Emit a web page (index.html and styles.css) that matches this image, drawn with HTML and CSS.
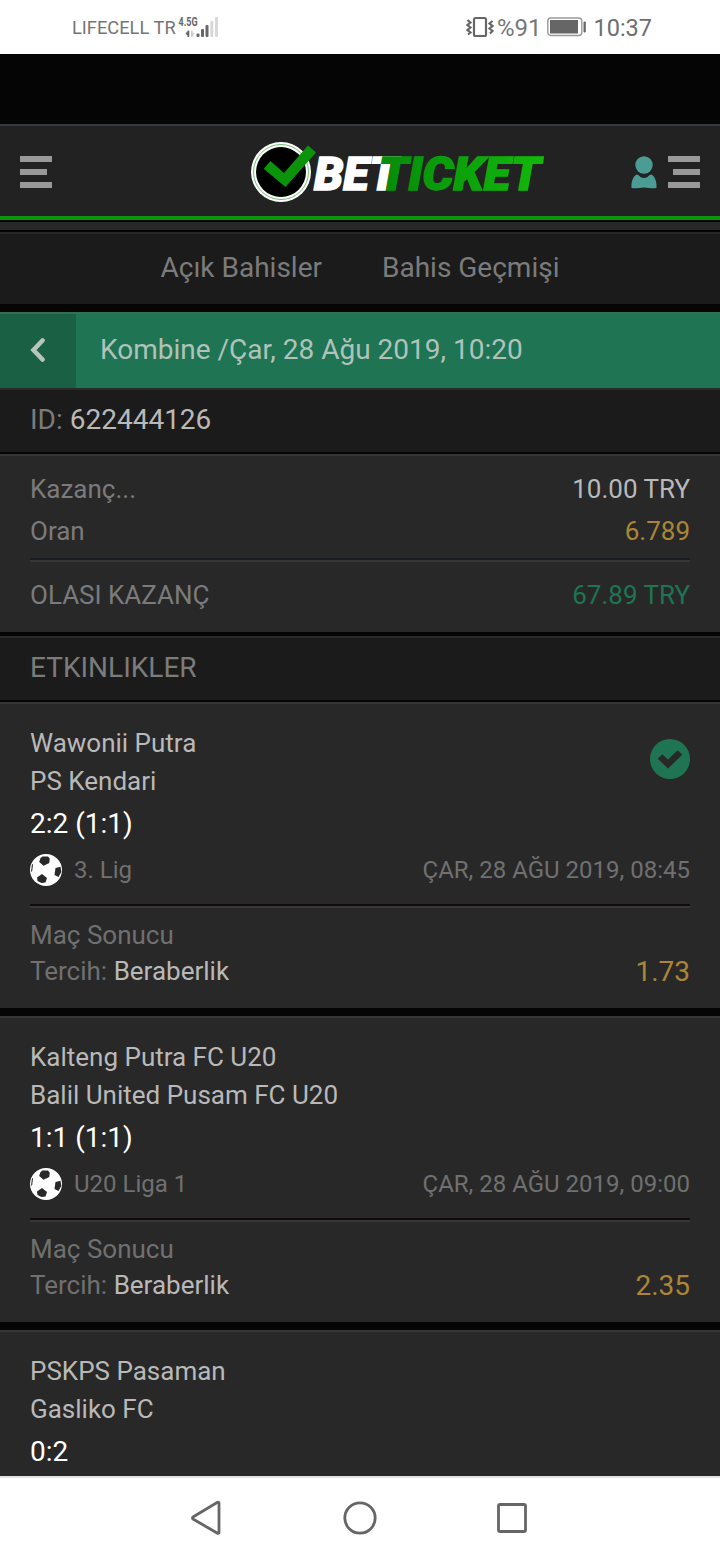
FILE: index.html
```
<!DOCTYPE html>
<html lang="tr">
<head>
    <meta charset="UTF-8">
    <meta name="viewport" content="width=device-width, initial-scale=1.0">
    <title>Betticket</title>
    <link rel="stylesheet" href="styles.css">
</head>
<body>
    <!-- reusable icons -->
    <svg class="defs" width="0" height="0">
        <symbol id="ball" viewBox="0 0 32 32">
            <circle cx="16" cy="16" r="16" fill="#fff"/>
            <path d="M10.500 4 12.500 2.500 18 2.500 19.700 4.500 19.300 9 13.500 11.700 9.200 8zM7 23.500 12 20 17 24 15.500 28.500 11.500 29 7.500 27zM25.500 14 30.500 12.800 31.300 18 28.500 23 24.500 21zM2 10 3 10.500 2.200 17 1 18z" fill="#282828"/>
        </symbol>
    </svg>

    <div class="status">
        <span class="carrier">LIFECELL TR</span>
        <svg class="signal" width="42" height="24" viewBox="0 0 42 24">
            <text x="0.5" y="11" font-family="Roboto" font-size="12" font-weight="700" fill="#666" textLength="19" lengthAdjust="spacingAndGlyphs">4.5G</text>
            <path d="M7.500 18.500L10 16v5zM9.500 15.500h1.800v6.500h-1.800z" fill="#666"/>
            <path d="M13 15.500h1.500v6.500h-1.500zM14.500 17.500l2 1-2 3z" fill="#ccc"/>
            <g fill="#666">
                <rect x="18.500" y="18.500" width="3" height="3.500" rx="1"/>
                <rect x="23" y="14" width="3" height="8" rx="1"/>
                <rect x="27.500" y="10" width="3" height="12" rx="1"/>
            </g>
            <g fill="#d8d8d8">
                <rect x="32.300" y="6" width="3" height="16" rx="1"/>
                <rect x="37" y="2" width="3" height="20" rx="1"/>
            </g>
        </svg>
        <svg class="vibrate" width="28" height="22" viewBox="0 0 28 22">
            <rect x="8" y="2" width="12" height="18" rx="1.500" fill="none" stroke="#666" stroke-width="2.200"/>
            <path d="M1.500 4 4.500 6.500 1.500 9 4.500 11.500 1.500 14 4.500 16.500 2 18.500M26.500 5 23.500 7.500 26.500 10 23.500 12.500 26.500 15 24 17.500" fill="none" stroke="#666" stroke-width="2.200"/>
        </svg>
        <span class="percent">%91</span>
        <svg class="battery" width="40" height="20" viewBox="0 0 40 20">
            <rect x="0.800" y="1" width="34" height="17.500" rx="3" fill="#fff" stroke="#999" stroke-width="1.400"/>
            <rect x="3" y="3" width="28" height="13.500" fill="#666"/>
            <rect x="36.500" y="4.500" width="2.300" height="11" rx="1" fill="#666"/>
        </svg>
        <span class="clock">10:37</span>
    </div>

    <div class="page">
        <div class="header">
            <div class="menu">
                <span></span><span></span><span></span>
            </div>
            <svg class="logo" width="294" height="64" viewBox="0 0 294 64">
                <defs>
                    <linearGradient id="green" x1="0" x2="1">
                        <stop offset="0" stop-color="#058b0a"/>
                        <stop offset="1" stop-color="#13b80b"/>
                    </linearGradient>
                </defs>
                <circle cx="31" cy="32" r="30" fill="#fff"/>
                <circle cx="31" cy="32" r="27.500" fill="none" stroke="#4db04d" stroke-width="0.800"/>
                <circle cx="31" cy="32" r="25" fill="#000"/>
                <path d="M13.700 28.700 20.500 21 34 33 58 5.500 66 12.500 35.500 47z" fill="#0b930b"/>
                <text class="logo-text" x="64" y="50.300" textLength="84" lengthAdjust="spacingAndGlyphs" fill="#fff" stroke="#fff">BET</text>
                <text class="logo-text" x="128.500" y="50.300" textLength="162" lengthAdjust="spacingAndGlyphs" fill="url(#green)" stroke="url(#green)">TICKET</text>
            </svg>
            <div class="header-right">
                <svg width="26" height="33" viewBox="0 0 26 33">
                    <circle cx="13" cy="9" r="8.700" fill="#4a9c94"/>
                    <path d="M5.500 18.500C8 18.500 9 22 13 22s5-3.500 7.500-3.500C24 20.500 26 26 25.500 32 21 33 17 31.500 13 31.500S5 33 .5 32C0 26 2 20.500 5.500 18.500z" fill="#4a9c94"/>
                </svg>
                <div class="menu menu-right">
                    <span></span><span></span><span></span>
                </div>
            </div>
        </div>
        <div class="strip"></div>
        <div class="tabs">
            <a>Açık Bahisler</a>
            <a>Bahis Geçmişi</a>
        </div>

        <div class="title">
            <div class="back">
                <svg width="16" height="24" viewBox="0 0 16 24">
                    <path d="M12.500 2.500 3.500 12 12.500 21.500" fill="none" stroke="#b9c4bf" stroke-width="4.600" stroke-linecap="round"/>
                </svg>
            </div>
            <div class="title-text">Kombine /Çar, 28 Ağu 2019, 10:20</div>
        </div>

        <div class="bar id-bar">ID:&nbsp;<b>622444126</b></div>

        <div class="summary">
            <div class="row"><span>Kazanç...</span><span class="light">10.00 TRY</span></div>
            <div class="row"><span>Oran</span><span class="gold">6.789</span></div>
            <div class="line blue"></div>
            <div class="row total"><span>OLASI KAZANÇ</span><span class="green">67.89 TRY</span></div>
        </div>

        <div class="bar events-bar">ETKINLIKLER</div>

        <div class="card">
            <svg class="won" width="40" height="40" viewBox="0 0 40 40">
                <circle cx="20" cy="20" r="20" fill="#1e7453"/>
                <path d="M10 17.500 18 25 30 13.500" fill="none" stroke="#282828" stroke-width="6.500" stroke-linejoin="miter"/>
            </svg>
            <div class="team">Wawonii Putra</div>
            <div class="team">PS Kendari</div>
            <div class="score">2:2 (1:1)</div>
            <div class="league">
                <svg width="32" height="32"><use href="#ball"/></svg>
                <span>3. Lig</span>
                <span class="date">ÇAR, 28 AĞU 2019, 08:45</span>
            </div>
            <div class="line"></div>
            <div class="market">Maç Sonucu</div>
            <div class="pick"><span>Tercih: <b>Beraberlik</b></span><span class="odds">1.73</span></div>
        </div>

        <div class="card">
            <div class="team">Kalteng Putra FC U20</div>
            <div class="team">Balil United Pusam FC U20</div>
            <div class="score">1:1 (1:1)</div>
            <div class="league">
                <svg width="32" height="32"><use href="#ball"/></svg>
                <span>U20 Liga 1</span>
                <span class="date">ÇAR, 28 AĞU 2019, 09:00</span>
            </div>
            <div class="line"></div>
            <div class="market">Maç Sonucu</div>
            <div class="pick"><span>Tercih: <b>Beraberlik</b></span><span class="odds">2.35</span></div>
        </div>

        <div class="card last">
            <div class="team">PSKPS Pasaman</div>
            <div class="team">Gasliko FC</div>
            <div class="score">0:2</div>
        </div>
    </div>

    <div class="nav">
        <svg width="36" height="36" viewBox="0 0 36 36">
            <path d="M29 3v29.500a1 1 0 0 1-1.500.8L3 19a1.200 1.200 0 0 1 0-2L27.500 2.200a1 1 0 0 1 1.500.8z"/>
        </svg>
        <svg width="36" height="36" viewBox="0 0 36 36">
            <circle cx="18" cy="18" r="15.200"/>
        </svg>
        <svg width="36" height="36" viewBox="0 0 36 36">
            <rect x="4.500" y="4.500" width="27" height="27" rx="1.500"/>
        </svg>
    </div>
</body>
</html>
```
FILE: styles.css
```
* {
    box-sizing: border-box;
}

body {
    display: flex;
    flex-direction: column;
    height: 1560px;
    margin: 0;
    background: #050505;
    color: #7b7b7b;
    font-family: Roboto, sans-serif;
    font-size: 26px;
    overflow: hidden;
}

svg {
    display: block;
    flex: none;
}

b {
    font-weight: 400;
    color: #b9b9b9;
}

.defs {
    position: absolute;
}

/* Phone status bar */
.status {
    display: flex;
    align-items: center;
    height: 54px;
    padding: 0 68px 0 72px;
    background: #fff;
    color: #666;
    white-space: nowrap;
}

.carrier {
    font-size: 18.3px;
    width: 106px;
    padding-top: 1px;
    color: #757575;
}

.vibrate {
    margin-left: auto;
}

.percent {
    margin: 2px 6px 0 3px;
    font-size: 24px;
    color: #777;
}

.clock {
    margin: 2px 0 0 6px;
    font-size: 23.5px;
    color: #6e6e6e;
}

/* Site header */
.page {
    flex: 1;
    padding-top: 70px;
    overflow: hidden;
}

.header {
    display: flex;
    justify-content: space-between;
    align-items: center;
    height: 96px;
    padding: 2px 20px 0;
    background: #222;
    border-top: 2px solid #343a45;
    border-bottom: 4px solid #0b930b;
}

.menu {
    display: flex;
    flex-direction: column;
    gap: 7px;
    width: 32px;
}

.menu span {
    height: 6px;
    background: #999;
}

.menu span:nth-child(2) {
    width: 27px;
}

.menu-right {
    align-items: flex-end;
}

.menu-right span {
    width: 32px;
}

.logo {
    margin-left: 110px;
}

.logo-text {
    font-family: Roboto, sans-serif;
    font-size: 47px;
    font-weight: 900;
    font-style: italic;
    stroke-width: 1.5px;
}

.header-right {
    display: flex;
    align-items: center;
    gap: 11px;
}

.strip {
    height: 8px;
    margin: 2px 0;
    background: #282828;
}

.tabs {
    display: flex;
    justify-content: center;
    gap: 60px;
    height: 72px;
    background: #1b1b1b;
    border-top: 2px solid #282828;
    font-size: 28px;
    line-height: 68px;
}

.title {
    display: flex;
    height: 76px;
    margin-top: 8px;
    background: #1e7453;
    border-top: 2px solid #356f58;
    color: #b0c2ba;
    font-size: 28px;
    line-height: 72px;
}

.back {
    display: flex;
    justify-content: center;
    align-items: center;
    width: 76px;
    padding-bottom: 3px;
    background: #196045;
}

.title-text {
    padding-left: 24px;
}

/* Bars and summary */
.bar {
    height: 64px;
    padding-left: 30px;
    background: #1b1b1b;
    border-top: 2px solid #2a2a2a;
    font-size: 28px;
    line-height: 60px;
}

.summary {
    height: 178px;
    margin: 2px 0 4px;
    padding: 12px 30px 0;
    background: #282828;
    border-top: 2px solid #363636;
}

.row {
    display: flex;
    justify-content: space-between;
    line-height: 42px;
}

.total {
    line-height: 66px;
}

.line {
    height: 4px;
    background: #383636;
    border-top: 2px solid #100c0e;
}

.blue {
    margin-top: 6px;
    background: #35363a;
    border-top-color: #171b24;
}

.light {
    color: #b9b9b9;
}

.gold {
    color: #ad8537;
}

.green {
    color: #1e7453;
}

/* Events */
.card {
    position: relative;
    height: 306px;
    margin-bottom: 8px;
    padding: 20px 30px 0;
    background: #282828;
    border-top: 2px solid #363636;
}

.events-bar + .card {
    margin-top: 2px;
}

.won {
    position: absolute;
    top: 35px;
    right: 30px;
}

.team {
    color: #b9b9b9;
    line-height: 38px;
}

.score {
    color: #fff;
    font-size: 28px;
    line-height: 48px;
}

.league {
    display: flex;
    align-items: center;
    gap: 12px;
    height: 44px;
    margin-bottom: 12px;
    color: #707070;
    font-size: 24px;
}

.date {
    margin-left: auto;
}

.market {
    margin-top: 9px;
    line-height: 36px;
    color: #707070;
}

.pick {
    display: flex;
    justify-content: space-between;
    line-height: 36px;
    color: #707070;
}

.odds {
    color: #ad8537;
    font-size: 28px;
    line-height: 38px;
}

/* Android buttons */
.nav {
    display: flex;
    justify-content: center;
    align-items: center;
    gap: 116px;
    height: 84px;
    padding-bottom: 2px;
    background: #fff;
    border-top: 2px solid #e2e2e2;
}

.nav path,
.nav circle,
.nav rect {
    fill: none;
    stroke: #666;
    stroke-width: 2.8;
}
```
